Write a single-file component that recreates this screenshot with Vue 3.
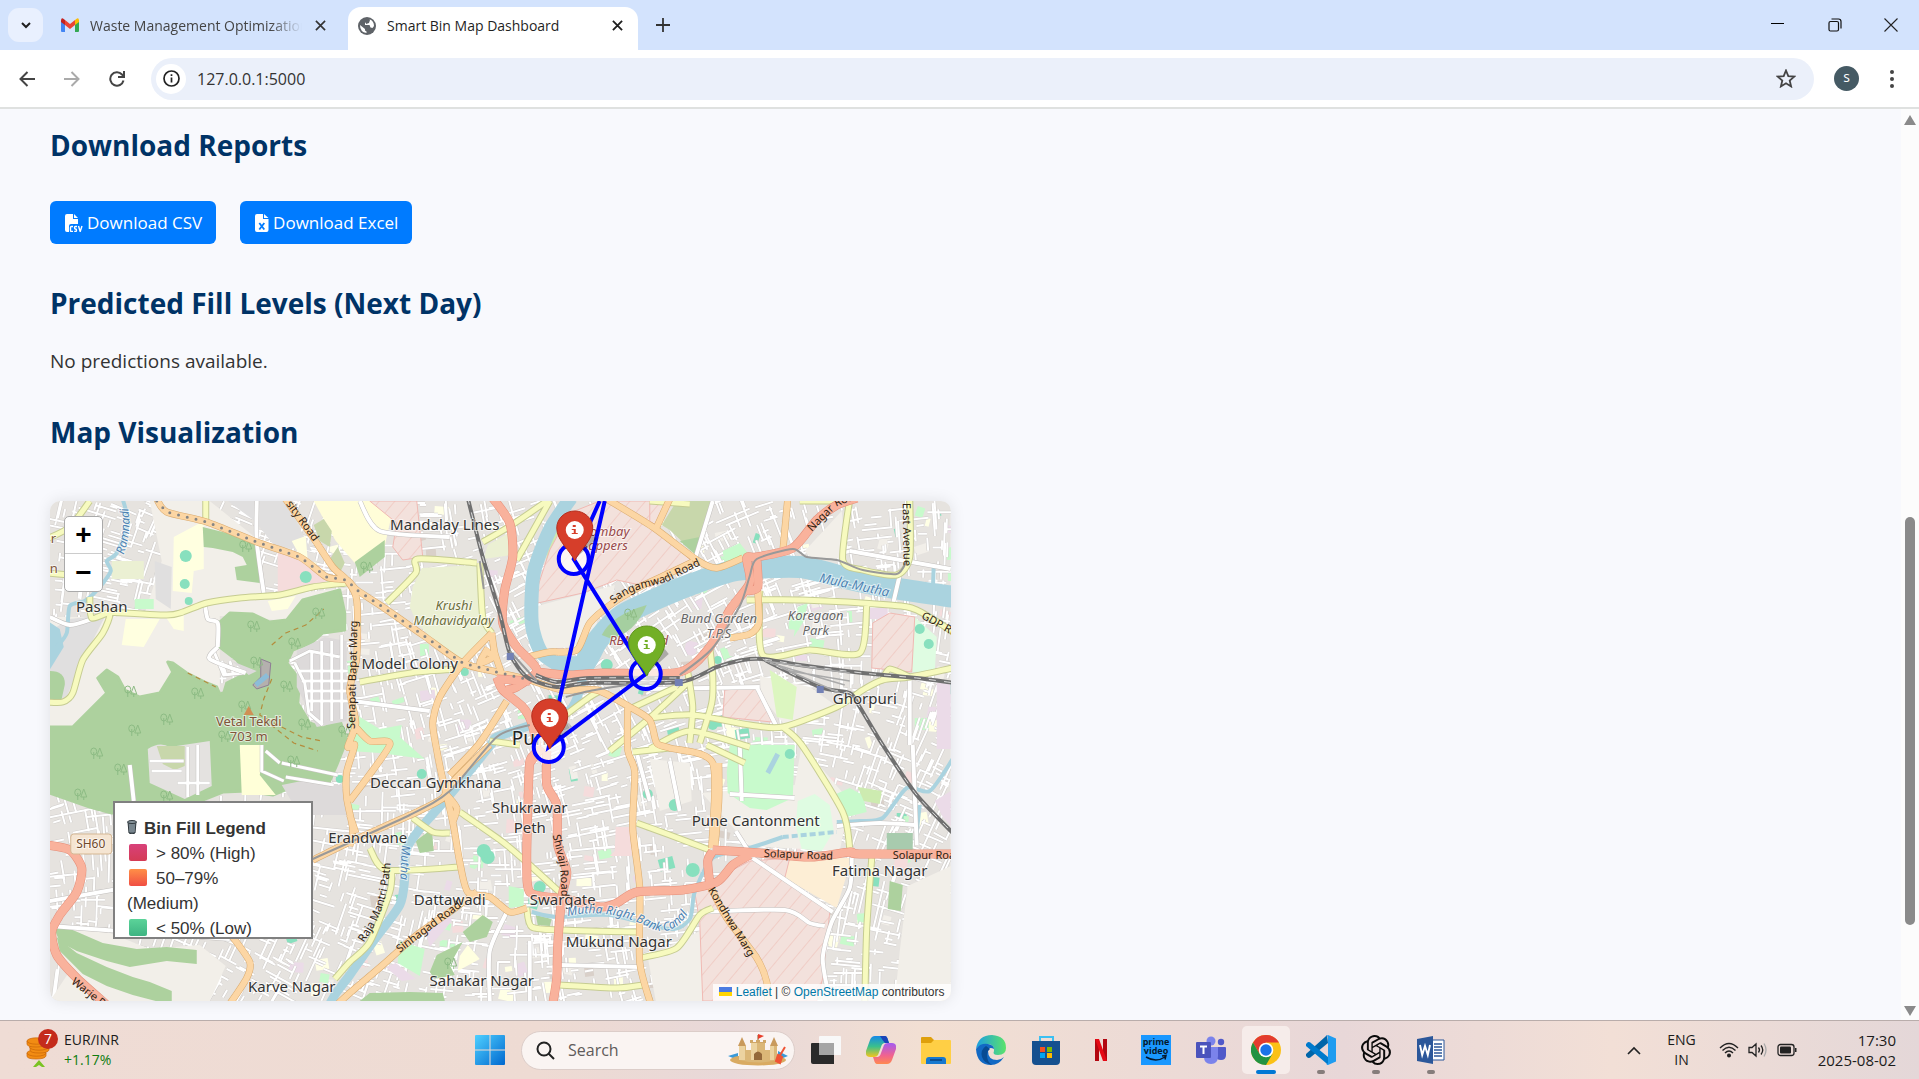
<script setup>
const smooth = (text) => {
  const p = text.trim().split(/\s+/).map((s) => s.split(',').map(Number))
  let d = `M${p[0][0]},${p[0][1]}`
  for (let i = 0; i < p.length - 1; i++) {
    const a = p[i - 1] || p[i]
    const b = p[i]
    const c = p[i + 1]
    const e = p[i + 2] || c
    const n = (v) => v.toFixed(1)
    d += `C${n(b[0] + (c[0] - a[0]) / 8)},${n(b[1] + (c[1] - a[1]) / 8)} ${n(c[0] - (e[0] - b[0]) / 8)},${n(c[1] - (e[1] - b[1]) / 8)} ${c[0]},${c[1]}`
  }
  return d
}
const join = (list) => list.map(smooth).join('')

let seed = 41
const rnd = () => {
  seed = (seed * 16807) % 2147483647
  return seed / 2147483647
}

// Residential streets: short segments that follow a slowly turning grid
const streets = []
for (let i = 0; i < 3900; i++) {
  const x = 4 + rnd() * 895
  const y = rnd() * 500
  const base = 0.3 * Math.sin(x / 120) + 0.25 * Math.cos(y / 90 + x / 300) - 0.05
  const turn = rnd() > 0.5 ? Math.PI / 2 : 0
  const len = 6 + rnd() * rnd() * 42
  const a = Math.round((base + turn) * 10) / 10
  const dx = (Math.cos(a) * len) / 2
  const dy = (Math.sin(a) * len) / 2
  streets.push(`M${(x - dx).toFixed(1)},${(y - dy).toFixed(1)}L${(x + dx).toFixed(1)},${(y + dy).toFixed(1)}`)
}
const streetPath = streets.join('')

const tints = ['#88e0be', '#c8facc', '#ffffe5', '#f5dcdc', '#ebdbe8', '#f2efe9', '#c8facc', '#ffffe5', '#f2efe9', '#d9d0c9']
const patches = []
for (let i = 0; i < 260; i++) {
  const s = 4 + rnd() * 11
  patches.push({ x: Math.round(230 + rnd() * 670), y: Math.round(rnd() * 500), w: Math.round(s), h: Math.round(4 + rnd() * 10), c: tints[i % 10], r: Math.round(rnd() * 40 - 20) })
}

const areas = [
  ['#f2efe9', '0,116 60,116 300,86 240,120 170,115 170,190 60,200 0,240'],
  ['#f2efe9', '100,0 160,0 210,40 212,92 130,110 95,112 112,60'],
  ['#e0dfdf', '0,130 20,118 56,114 30,165 16,198 0,200'],
  ['#e0dfdf', '105,60 122,66 121,108 106,98'],
  ['#e0dfdf', '178,0 236,0 262,50 225,45 205,20'],
  ['#f2efe9', '0,425 60,432 100,448 150,444 176,465 160,500 0,500 20,470'],
  ['#f2efe9', '600,258 640,262 642,300 610,310'],
  ['#f2efe9', '755,50 792,10 796,58 760,56'],
  ['#f2efe9', '710,175 760,186 788,206 735,224 712,196'],
  ['#f2efe9', '858,385 901,365 901,500 845,500 850,450'],
  ['#f2efe9', '652,292 745,284 752,244 800,300 790,350 700,345'],
  ['#f2efe9', '484,106 565,84 562,100 538,120 525,146 492,148'],
  ['#f2efe9', '598,456 650,430 655,500 606,500'],
  ['#fffdd8', '264,0 345,0 335,45 305,62 286,40'],
  ['#ffffe0', '124,36 154,20 154,68 144,70 142,92 123,90'],
  ['#ffffe0', '76,118 110,118 94,146 72,144'],
  ['#ffffe0', '116,116 134,114 134,130 124,128'],
  ['#ffffe0', '218,100 246,95 238,108 222,110'],
  ['#ffffe0', '242,40 256,35 258,60 268,62 256,66'],
  ['#f5dcdc', '228,50 250,58 278,80 262,86 228,92'],
  ['#c8facc', '85,98 104,98 104,108 85,108'],
  ['#c8facc', '300,210 330,228 352,224 350,236 375,258 330,252 300,250'],
  ['#c8facc', '350,440 375,448 370,475 348,462'],
  ['#ebdbe8', '374,425 400,412 402,420 380,446'],
  ['#ebdbe8', '336,466 346,462 366,478 352,480'],
  ['#ebf0d3', '372,67 428,64 430,112 442,132 413,159 400,156 367,122 360,106 363,86'],
  ['#ebf0d3', '62,60 94,60 94,78 62,78'],
  ['#ebf0d3', '434,58 438,44 462,30 462,54'],
  ['#cdebb0', '496,62 500,30 520,14 524,60'],
  ['#add19e', '153,26 177,32 207,44 210,82 187,79 185,66 197,64 193,56 183,51 163,47 154,46'],
  ['#add19e', '335,39 335,56 310,76 305,61'],
  ['#c8d7ab', '627,0 663,0 647,54 620,29 612,24'],
  ['#add19e', '630,40 650,36 646,54'],
  ['#c8d7ab', '264,24 274,18 282,30 280,46 270,40'],
  ['#c8d7ab', '280,58 288,46 295,62 290,72'],
  ['#add19e', '413,431 433,414 443,421 437,436 420,441'],
  ['#add19e', '380,471 387,454 413,441 400,464 405,474 385,478'],
  ['#ffffe0', '410,455 418,444 430,458 408,470'],
  ['#add19e', '310,500 320,492 360,491 393,492 395,500'],
  ['#add19e', '366,340 382,328 384,350 370,352'],
  ['#add19e', '486,414 502,418 500,425 488,424'],
  ['#add19e', '3,424 23,429 53,442 87,448 117,446 147,449 147,463 117,460 80,466 57,460 27,450 10,441'],
  ['#add19e', '7,436 27,452 57,466 83,476 100,481 122,490 122,500 106,500 83,494 57,485 33,473 10,450'],
  ['#c8facc', '677,271 680,244 745,244 743,297 717,309 700,307 678,292'],
  ['#c8facc', '784,294 800,287 813,294 817,311 797,316 790,305'],
  ['#cdebb0', '808,286 832,290 830,303 814,300'],
  ['#dffce2', '748,300 765,293 780,304 784,330 772,350 752,348 746,325'],
  ['#dcf6c0', '720,169 747,186 743,219 727,216'],
  ['#dffce2', '865,116 887,136 885,171 862,171'],
  ['#c8facc', '673,50 690,42 698,52 690,68 675,65'],
  ['#c8facc', '748,106 758,102 754,120 744,136'],
  ['#c8facc', '459,385 474,388 474,405 459,407'],
  ['#a8cbae', '837,332 863,332 863,349 837,349'],
  ['#add19e', '840,380 853,384 851,410 838,408'],
  ['#fdeed5', '740,357 802,357 787,407 735,377'],
  ['#ebdbe8', '887,182 901,182 901,248 887,248'],
  ['#ebdbe8', '885,300 901,290 901,325 893,316'],
  ['#ebdbe8', '820,107 838,107 838,118 820,118'],
  ['#f5dcdc', '566,326 582,326 582,355 560,355 565,350'],
]
const vetal = '0,226 23,226 43,206 57,192 48,177 57,169 68,176 75,189 90,196 110,192 123,171 118,161 123,162 137,172 157,182 167,186 170,193 174,192 177,182 197,172 187,159 170,146 169,122 180,112 203,113 220,121 237,119 253,99 290,89 295,112 295,129 273,132 263,141 243,149 237,162 250,179 248,202 260,222 273,227 290,219 297,239 287,264 277,287 247,284 223,294 197,290 173,291 153,299 123,311 90,311 62,312 40,306 0,292'
const military = [
  '520,12 550,0 620,0 607,29 643,61 600,86 567,79 533,92 488,102 487,89 500,49',
  '320,0 367,0 373,56 353,59 343,46 347,22',
  '823,122 840,112 865,116 862,171 822,167',
  '675,189 707,186 722,221 673,216',
  '645,391 660,381 700,360 740,357 735,377 780,411 773,477 767,500 653,500 650,421',
  '600,0 618,0 606,24 600,20',
]
const ballParks = [
  [136, 55, 6], [135, 83, 5], [256, 76, 6], [870, 128, 5], [879, 143, 5], [663, 224, 5], [625, 304, 6], [643, 369, 7], [490, 386, 6], [740, 253, 5], [438, 356, 7], [434, 350, 7], [372, 273, 5], [557, 164, 6], [415, 171, 4], [598, 293, 5], [668, 159, 4], [139, 100, 4], [206, 259, 4], [290, 278, 4],
]
const rivers = [
  { w: 14, d: smooth('521,-3 500,29 484,72 482,122 492,152 514,167') },
  { w: 22, d: smooth('508,166 533,164 548,139 573,114 620,92 640,84 687,69 750,66 800,78 850,88 905,96') },
  { w: 9, d: smooth('535,166 530,189 520,209 487,222 447,236 441,244 400,294 370,328 356,350 355,377 350,404 323,441 300,474 287,491 280,503') },
  { w: 4, d: smooth('73,-2 78,22 67,52 57,60 61,70 50,86 35,100 20,105 17,132 7,146') },
  { w: 4, d: smooth('903,258 880,290 857,287 833,317 810,320 787,321') },
  { w: 4, d: smooth('733,336 703,346 663,357 645,391 640,418 620,428 560,414 507,416 482,411') },
  { w: 4, d: smooth('870,304 866,340') },
  { w: 4, d: smooth('884,64 883,92') },
  { w: 5, d: smooth('728,253 718,272') },
]
const yellow = join([
  '-3,72 20,74', '57,111 117,114 133,111 157,102 190,97 230,94 263,86 297,82', '40,96 42,117 60,112 53,132 33,159 23,192 13,201 -3,201',
  '156,-2 156,20', '-3,38 20,26 40,0', '500,0 467,59', '433,41 462,24 500,-2', '427,62 368,58 366,72 337,102', '430,62 433,116 442,132', '310,181 367,171 410,168',
  '697,99 753,99 840,104 867,109 905,132', '817,104 810,152 760,149 713,154 710,90', '800,-2 793,59 813,69 847,74 860,56 860,-2',
  '660,146 663,176 662,202 650,242', '638,171 643,206 640,242', '600,217 643,214 700,224 733,226 787,206 813,189 833,179 860,176 903,167',
  '733,226 752,244 793,311 800,347', '833,179 840,168 860,176', '580,208 627,186', '513,216 540,196 553,189', '560,250 600,217 640,180',
  '410,311 453,341 480,364 513,394', '320,347 337,369 410,366', '363,317 383,331 400,332', '342,369 340,391 320,441 300,461 285,478', '477,407 482,426 513,429 587,431',
  '510,484 567,487 593,484', '583,251 620,247', '587,322 620,334 660,349', '657,244 695,262', '590,457 627,447 650,414 663,407', '822,357 817,427 815,503', '600,0 640,3', '750,0 800,0', '440,240 470,244', '600,248 640,230 700,246',
])
const orange = join([
  '107,-2 117,11 157,21 207,41 250,56 277,76 297,79 307,89 333,106 373,134 413,162 447,171 480,179',
  '235,-3 263,36 283,66 297,79 307,99 307,156 300,189 306,222 298,246 305,244 297,271 297,297 303,328 300,345',
  '442,132 413,162 390,196 383,222 387,249 392,274 403,321 410,361 418,391 440,396 460,411 477,407', '457,200 430,242 400,274', '442,132 445,152 453,176', '433,150 445,155 430,162 438,147',
  '478,156 500,151 527,149 540,122 563,102 590,86 620,72 643,61', '557,-2 603,26 647,59 667,67 693,57', '620,-2 607,26', '738,-2 733,51', '708,89 709,122 700,133 680,137',
  '480,179 513,189 547,189 580,206 600,219 607,242 620,247 663,262 662,347', '578,204 578,249 585,271 583,327 590,387 590,461 601,503', '669,262 669,300 665,347',
  '440,244 400,284 393,297 367,311 300,341 263,359', '397,294 407,307 403,321', '183,436 200,461 197,477 180,503', '427,391 400,411 367,434 333,464 300,492 288,503', '660,384 677,417 707,457 717,481 718,503', '300,314 306,332', '305,225 320,240 340,244 300,300',
])
const red = join([
  '443,-3 460,22 463,56 455,89 453,122 467,146 487,169 467,186 457,189', '487,171 517,174 553,172 630,171 660,146 680,109 700,82 697,57 707,56 743,47 767,19 787,4 807,-3', '707,58 708,86 697,90',
  '447,176 453,189 473,206 482,222 487,249 480,261 478,311 477,361 480,391 507,397', '497,250 497,284 507,304 508,344 517,371 512,397 508,444 507,477 503,503', '447,178 480,180', '492,246 480,262',
  '512,397 550,406 567,402 587,391 633,389 667,381 683,364 700,354', '663,349 710,352 760,356 800,351 810,353 903,353', '663,350 658,360 660,382',
  '-3,344 20,349 32,367 27,391 10,414 2,431 7,454 27,477 56,503',
])
const white = join([
  '703,357 783,411', '802,357 800,387 782,421 773,457 778,490', '863,244 867,344', '860,179 860,244', '787,325 830,322 866,324', '650,411 735,409 760,422 775,425', '645,59 663,0', '707,186 727,226', '800,50 901,68', '850,74 843,104', '207,0 207,40 214,92', '155,102 158,118 168,122 168,146', '168,146 160,158 196,172', '600,188 710,186', '0,116 20,124 42,118', '0,425 180,438', '80,264 84,300', '0,400 170,370', '587,252 600,300', '310,0 330,30 400,36', '457,411 440,450 440,500', '303,200 380,210', '620,260 630,310', '690,244 692,300', '680,293 745,297', '686,330 700,352', '510,464 590,466', '480,500 480,440',
])
const rail = join([
  '418,-3 433,56 450,112 460,152 477,176 507,186 540,182 630,181 667,166 693,159 713,158 750,164 813,172 867,177 905,182',
  '713,158 770,186 800,192 810,206 833,244 867,294 905,334', '486,174 507,181 540,177 630,177',
])
const metro = join(['480,224 447,236 400,290 360,314 263,358', '630,174 662,148 690,105 700,75 707,58 743,48 757,56 787,59 813,69 847,73 857,60', '430,60 434,88', '487,180 460,150', '600,180 540,190 516,196'])

const blocks = 'M240,160l20-10 30,6M250,170h48M252,180h46M255,190h44M258,200h40M262,150v60M272,140v84M282,140v80M292,134v84M245,162l10,20 4,30 14,12M100,260h34M102,270h30M138,246v50M148,244v50M128,282h32M164,150l10,24 20,-2M172,160l4,14M180,160l4,14M212,244v26l22,10M216,250l14,12M232,262l56,12M236,276l48,8'

const trees = [[80, 190], [195, 45], [203, 125], [268, 112], [244, 142], [206, 161], [236, 185], [194, 205], [147, 192], [116, 218], [84, 229], [174, 235], [254, 223], [46, 252], [70, 268], [30, 293], [116, 295], [243, 260], [294, 230], [316, 66], [400, 462], [580, 113]]

const places = [
  ['Mandalay Lines', 395, 29], ['Pashan', 52, 111], ['Model Colony', 360, 168], ['Ghorpuri', 815, 203], ['Deccan Gymkhana', 386, 287], ['Shukrawar', 480, 312], ['Peth', 480, 332], ['Erandwane', 318, 342], ['Dattawadi', 400, 404], ['Swargate', 513, 404], ['Mukund Nagar', 569, 446], ['Sahakar Nagar', 432, 485], ['Karve Nagar', 242, 491], ['Pune Cantonment', 706, 325], ['Fatima Nagar', 830, 375],
]
const minor = [
  ['Krushi', 404, 109, 'olive'], ['Mahavidyalay', 404, 124, 'olive'], ['Bombay', 556, 35, 'rust'], ['Sappers', 555, 49, 'rust'], ['Vetal Tekdi', 199, 225, 'peak'], ['703 m', 199, 240, 'peak'], ['Bund Garden', 669, 122, 'grey'], ['T.P.S', 669, 137, 'grey'], ['Koregaon', 766, 119, 'grey'], ['Park', 766, 134, 'grey'], ['RBM Road', 589, 144, 'rust'],
]
const lines = [
  { id: 'l1', t: 'Nagar Road', d: 'M762,31 L788,5 L820,-8', c: 'road' },
  { id: 'l2', t: 'East Avenue', d: 'M853,2 L854,70', c: 'road' },
  { id: 'l3', t: 'GDP Road', d: 'M871,117 L920,144', c: 'road' },
  { id: 'l4', t: 'Ramnadi', d: 'M74,54 C80,35 82,20 76,-4', c: 'blue' },
  { id: 'l5', t: 'sity Road', d: 'M236,3 L272,52', c: 'road' },
  { id: 'l6', t: 'Senapati Bapat Marg', d: 'M305,228 L308,110', c: 'road' },
  { id: 'l7', t: 'Sangamwadi Road', d: 'M564,103 C580,88 600,86 617,81 L655,62', c: 'road' },
  { id: 'l8', t: 'Mula-Mutha', d: 'M769,81 L840,96', c: 'blue big' },
  { id: 'l9', t: 'Mutha Right Bank Canal', d: 'M518,415 C545,409 575,413 600,427 C622,437 636,420 645,400', c: 'blue' },
  { id: 'l10', t: 'Mutha', d: 'M352,344 L350,390', c: 'blue' },
  { id: 'l11', t: 'Raja Mantri Path', d: 'M314,442 C330,418 338,400 341,360', c: 'road' },
  { id: 'l12', t: 'Sinhagad Road', d: 'M350,452 L410,407', c: 'road' },
  { id: 'l13', t: 'Shivaji Road', d: 'M503,334 C506,352 513,360 511,402', c: 'road' },
  { id: 'l14', t: 'Kondhwa Marg', d: 'M658,389 L700,458', c: 'road' },
  { id: 'l15', t: 'Warje Road', d: 'M21,482 L70,520', c: 'road' },
  { id: 'l16', t: 'Solapur Road', d: 'M714,356 L790,359', c: 'road' },
  { id: 'l17', t: 'Solapur Road', d: 'M843,358 L920,358', c: 'road' },
]
const pins = [
  { x: 525, y: 58, c: '#d63e2a', e: '#b5301f' },
  { x: 597, y: 173, c: '#72af26', e: '#5f951c' },
  { x: 500, y: 246, c: '#d63e2a', e: '#b5301f' },
]
</script>

<template>
  <div class="screen">
    <header class="tabs">
      <button class="tab-search" aria-label="Search tabs">
        <svg width="12" height="12" viewBox="0 0 12 12"><path d="M2 4l4 4 4-4" fill="none" stroke="#1f1f1f" stroke-width="2" /></svg>
      </button>
      <div class="tab">
        <svg width="18" height="14" viewBox="0 0 18 14"><path d="M0 2v11q0 1 1 1h3V5z" fill="#4285f4" /><path d="M18 2v11q0 1-1 1h-3V5z" fill="#34a853" /><path d="M14 2l2-1.600Q18 0 18 2.500V4l-4 3z" fill="#fbbc04" /><path d="M4 2l5 4 5-4v5l-5 4-5-4z" fill="#ea4335" /><path d="M0 4V2.500Q0 0 2 .4L4 2v5z" fill="#c5221f" /></svg>
        <span class="tab-title faded">Waste Management Optimization</span>
        <button class="tab-close" aria-label="Close tab"><svg width="11" height="11" viewBox="0 0 12 12"><path d="M1 1l10 10M11 1L1 11" stroke="#333" stroke-width="1.800" /></svg></button>
      </div>
      <div class="tab active">
        <svg width="18" height="18" viewBox="0 0 18 18"><circle cx="9" cy="9" r="9" fill="#5f6368" /><path d="M2 8l5 4v1.500l1.500 1V16Q2 15 2 8zM12 2.500L10 4 7 6v2h4.500l1 2.500 2 .5L16 9q0-5-4-6.500z" fill="#fff" /><path d="M7 1.800L12 3l-1 3-3 1z" fill="#5f6368" /></svg>
        <span class="tab-title">Smart Bin Map Dashboard</span>
        <button class="tab-close" aria-label="Close tab"><svg width="11" height="11" viewBox="0 0 12 12"><path d="M1 1l10 10M11 1L1 11" stroke="#1f1f1f" stroke-width="2" /></svg></button>
      </div>
      <button class="new-tab" aria-label="New tab"><svg width="14" height="14" viewBox="0 0 14 14"><path d="M7 0v14M0 7h14" stroke="#333" stroke-width="1.800" /></svg></button>
      <div class="window-buttons">
        <button aria-label="Minimize"><svg width="14" height="14" viewBox="0 0 14 14"><path d="M0 5.500h13" stroke="#000" /></svg></button>
        <button aria-label="Restore"><svg width="14" height="14" viewBox="0 0 14 14" fill="none" stroke="#111" stroke-width="1.200"><rect x="1" y="3.500" width="9.500" height="9.500" rx="1.500" /><path d="M3.500 1h7q2.500 0 2.500 2.500v7" /></svg></button>
        <button aria-label="Close"><svg width="14" height="14" viewBox="0 0 14 14"><path d="M.5.5l13 13M13.500.5l-13 13" stroke="#222" stroke-width="1.100" /></svg></button>
      </div>
    </header>

    <nav class="toolbar">
      <button aria-label="Back"><svg width="16" height="16" viewBox="0 0 16 16" fill="none" stroke="#444" stroke-width="2"><path d="M16 8H2M8.500 1L1.500 8l7 7" /></svg></button>
      <button aria-label="Forward"><svg width="16" height="16" viewBox="0 0 16 16" fill="none" stroke="#aaa" stroke-width="2"><path d="M0 8h14M7.500 1l7 7-7 7" /></svg></button>
      <button aria-label="Reload"><svg width="16" height="16" viewBox="0 0 16 16" fill="none" stroke="#444" stroke-width="2"><path d="M14.500 9.500A6.700 6.700 0 1 1 13 3.500L15 5.500M15 0v6H9" /></svg></button>
      <label class="omnibox">
        <span class="info"><svg width="17" height="17" viewBox="0 0 17 17"><circle cx="8.500" cy="8.500" r="7.500" fill="none" stroke="#222" stroke-width="1.700" /><path d="M8.500 7.500v5M8.500 4.200v1.800" stroke="#222" stroke-width="1.700" /></svg></span>
        <input type="text" value="127.0.0.1:5000" aria-label="Address" />
        <svg width="20" height="19" viewBox="0 0 20 19"><path d="M10 1.500l2.300 5.600 6 .5-4.600 3.900 1.400 5.900L10 14.200l-5.100 3.200 1.400-5.900L1.700 7.600l6-.5z" fill="none" stroke="#444" stroke-width="1.800" /></svg>
      </label>
      <span class="avatar">s</span>
      <button class="dots" aria-label="Menu"><svg width="6" height="20" viewBox="0 0 6 20" fill="#444"><circle cx="3" cy="3" r="2" /><circle cx="3" cy="10" r="2" /><circle cx="3" cy="17" r="2" /></svg></button>
    </nav>

    <div class="viewport">
      <main>
        <h2>Download Reports</h2>
        <div class="downloads">
          <a href="#csv"><svg width="18" height="18" viewBox="0 0 18 18"><path d="M2 0h6v5h5v5H6q-2 0-2 2v6H2q-2 0-2-2V2q0-2 2-2zM9 0l4 4H9z" fill="#fff" /><path d="M8 12.500H6.500q-1 0-1 1v3q0 1 1 1H8M12 12.500h-1.500q-1 0-1 1.200t1 1.300 1 1.300-1 1.200H9.200M13.500 12l1.700 5.500L17 12" fill="none" stroke="#fff" stroke-width="1.400" /></svg><span>Download CSV</span></a>
          <a href="#excel"><svg width="14" height="18" viewBox="0 0 14 18"><path d="M2 0h6v5h5.500v11q0 2-2 2H2q-2 0-2-2V2q0-2 2-2zM9 0l4.500 4H9z" fill="#fff" /><path d="M4.300 9l5 6.500M9.300 9l-5 6.500" stroke="#007bff" stroke-width="1.800" /></svg><span>Download Excel</span></a>
        </div>
        <h2>Predicted Fill Levels (Next Day)</h2>
        <p>No predictions available.</p>
        <h2>Map Visualization</h2>

        <section class="map" aria-label="Map">
          <svg class="canvas" viewBox="0 0 901 500" preserveAspectRatio="xMidYMid slice">
            <defs>
              <pattern id="hatch" width="12" height="12" patternUnits="userSpaceOnUse" patternTransform="rotate(40)"><rect width="12" height="12" fill="#f3e1dc" /><path d="M0 0v12" stroke="#f0cdc6" stroke-width="2" /></pattern>
              <symbol id="tree" viewBox="0 0 14 12"><path d="M4 12V5M4 1q-3 0-3 3.500T4 8t3-3.500T4 1M10 12V9M10 1L7 9h6z" fill="none" stroke="#8dbb84" stroke-width="1" /></symbol>
            </defs>
            <rect width="901" height="500" fill="#e6e3df" />
            <rect v-for="(q, i) in patches" :key="i" :x="q.x" :y="q.y" :width="q.w" :height="q.h" :fill="q.c" :transform="`rotate(${q.r} ${q.x} ${q.y})`" />
            <path :d="streetPath" stroke="#cfccca" stroke-width="3" fill="none" />
            <path :d="streetPath" stroke="#fff" stroke-width="2" fill="none" />
            <polygon v-for="(a, i) in areas" :key="'a' + i" :points="a[1]" :fill="a[0]" />
            <polygon :points="vetal" fill="#add19e" stroke="#add19e" stroke-width="3" stroke-linejoin="round" />
            <polygon v-for="(m, i) in military" :key="'m' + i" :points="m" fill="url(#hatch)" stroke="#f0b9b3" />
            <circle v-for="(b, i) in ballParks" :key="'b' + i" :cx="b[0]" :cy="b[1]" :r="b[2]" fill="#88e0be" />
            <path d="M98,248Q110,240 120,246L160,240 162,285 135,298 100,282z" fill="#e4e2e0" />
            <path d="M107,245h28v20l-10,4-12-6z" fill="#c8d7ab" />
            <path d="M190,244h24l-4,30 16,20h-34z" fill="#ffffd8" />
            <path d="M247,150l28-14 22,4v80l-30,6-20-40z M182,160l25,10-8,4z M232,284l20-4 40,4 8,30h-50z" fill="#dddada" />
            <path :d="blocks" stroke="#c7c4c2" stroke-width="4" fill="none" />
            <path :d="blocks" stroke="#fff" stroke-width="3" fill="none" />
            <path d="M211,158l10,4-2,22-12,4-4-4 8-8z" fill="#b4b0ae" stroke="#8e7d94" /><path d="M206,184l12-10" stroke="#8cbdd8" stroke-width="5" />
            <path d="M138,172l20,10 8,4M222,144l14-12 20-8 18-16M222,178l-8,20-4,16 18,10 24,12 20,4M214,218l30,24 24,8" fill="none" stroke="#b48c3c" stroke-width="1.200" stroke-dasharray="5 4" />
            <path d="M-2,120L10,128 14,146-2,172z" fill="#aad3df" /><path d="M0,170q16,0 15,14l-4,18H0z" fill="#add19e" />
            <path v-for="(r, i) in rivers" :key="'r' + i" :d="r.d" :stroke-width="r.w" fill="none" stroke="#aad3df" />
            <path d="M733,336L787,331" stroke="#aad3df" stroke-width="4" stroke-dasharray="6 3" />
            <path d="M552,134q10-20 45-30-12,28-35,34z" fill="#a5cfa0" />
            <svg v-for="(t, i) in trees" :key="'t' + i" :x="t[0] - 6" :y="t[1] - 6" width="14" height="12"><use href="#tree" /></svg>

            <g fill="none" stroke-linejoin="round">
              <path :d="white" stroke="#c2bfbd" stroke-width="5" /><path :d="white" stroke="#fff" stroke-width="4" />
              <path :d="yellow" stroke="#c6cc92" stroke-width="7" /><path :d="yellow" stroke="#f7fabf" stroke-width="5" />
              <path :d="orange" stroke="#d9aa6e" stroke-width="7" /><path :d="orange" stroke="#fcd6a4" stroke-width="6" />
              <path :d="red" stroke="#e58f7a" stroke-width="9" /><path :d="red" stroke="#f9b29c" stroke-width="8" />
              <path d="M107,0L117,11 157,21 207,41 250,56 277,76 297,79 307,89 333,106 373,134 413,162 447,171 480,179" stroke="#858585" stroke-width="3" stroke-linecap="round" stroke-dasharray="0 9" />
              <path :d="rail" stroke="#707070" stroke-width="4" /><path :d="rail" stroke="#ddd" stroke-width="1" stroke-dasharray="7 8" />
              <path d="M715,160L800,172 M720,162L795,184 M730,166L790,192 M740,170L800,180" stroke="#aaa" stroke-width="1.500" />
              <path :d="metro" stroke="#999" stroke-width="2" />
            </g>
            <path d="M457,152h7v7h-7zM625,178h8v7h-8zM767,185h7v7h-7z" fill="#7381b5" />
            <path d="M194,214l5-9 5,9z" fill="#d08f55" />
            <rect x="21" y="333" width="41" height="20" rx="3" fill="#f5e5d2" stroke="#d5b793" />
            <text x="41" y="347" class="shield">SH60</text>
            <text x="1" y="42" class="peak small">r</text><text x="0" y="72" class="peak small">n</text>
            <text x="462" y="244" class="city">Pune</text>
            <text v-for="p in places" :key="p[0]" :x="p[1]" :y="p[2]" class="place">{{ p[0] }}</text>
            <text v-for="p in minor" :key="p[0]" :x="p[1]" :y="p[2]" class="minor" :class="p[3]">{{ p[0] }}</text>
            <g v-for="l in lines" :key="l.id"><path :id="l.id" :d="l.d" fill="none" /><text class="along" :class="l.c"><textPath :href="'#' + l.id">{{ l.t }}</textPath></text></g>

            <g stroke="#00f" stroke-width="4" fill="none">
              <circle v-for="(p, i) in pins" :key="i" :cx="p.x - 1" :cy="p.y" r="15" fill="#fff" fill-opacity="0.7" />
              <path d="M550,0L524,58 596,173 499,246 555,0" />
            </g>
            <g v-for="(p, i) in pins" :key="'p' + i" :transform="`translate(${p.x} ${p.y})`">
              <path d="M0,0L22,-20 14,-30z" fill="#000" opacity="0.25" />
              <path d="M0,2C-4,-8 -18,-18 -18,-31A18,17 0 0 1 18,-31C18,-18 4,-8 0,2z" :fill="p.c" :stroke="p.e" />
              <circle cy="-29" r="9" fill="#fff" />
              <path d="M-2,-34h3v2h-3zM-3,-30h4v4h2v1h-6v-1h2v-3h-2z" :fill="p.c" />
            </g>
          </svg>
          <div class="zoom"><button aria-label="Zoom in">+</button><button aria-label="Zoom out">−</button></div>
          <div class="legend">
            <strong><svg width="10" height="14" viewBox="0 0 10 14"><path d="M1 2h8l-1 11q-3 2-6 0z" fill="#59666e" stroke="#2f383d" /><path d="M3 4v8M5 4v8M7 4v8" stroke="#a9b7bf" stroke-width=".8" /><ellipse cx="5" cy="2" rx="4.500" ry="1.500" fill="#8b979e" stroke="#2f383d" /></svg>Bin Fill Legend</strong><br />
            <i class="high"></i>&gt; 80% (High)<br />
            <i class="medium"></i>50–79% (Medium)<br />
            <i class="low"></i>&lt; 50% (Low)
          </div>
          <div class="credit"><svg width="13" height="9" viewBox="0 0 13 9"><path d="M0 0h13v5H0z" fill="#4c7be1" /><path d="M0 5h13v4H0z" fill="#ffd500" /></svg> <a href="#leaflet">Leaflet</a> | © <a href="#osm">OpenStreetMap</a> contributors</div>
        </section>
      </main>
      <div class="scrollbar"><i class="up"></i><div class="rail"><div class="thumb"></div></div><i class="down"></i></div>
    </div>

    <footer class="taskbar">
      <div class="widget">
        <div class="coins">
          <svg width="30" height="36" viewBox="0 0 30 36"><g fill="#f28c13" stroke="#c96508" stroke-width=".7"><path d="M1 21v3q0 3 9 3t10-3v-3z" /><ellipse cx="10.500" cy="21" rx="9.500" ry="3.200" /><path d="M4 15v3q0 3 9 3t10-3v-3z" /><ellipse cx="13" cy="15" rx="9.500" ry="3.200" /><path d="M1 9v3q0 3 9 3t10-3V9z" /><ellipse cx="10.500" cy="9" rx="9.500" ry="3.200" /></g><path d="M13 28l6 7h-3l-3-2-3 2H7z" fill="#7ac323" /></svg>
          <span class="badge">7</span>
        </div>
        <div class="rate"><span>EUR/INR</span><span class="gain">+1.17%</span></div>
      </div>
      <div class="apps">
        <button class="app" aria-label="Start"><svg width="30" height="30" viewBox="0 0 30 30"><defs><linearGradient id="win" x1="0" y1="0" x2="1" y2="1"><stop stop-color="#4fd0ff" /><stop offset="1" stop-color="#0068cf" /></linearGradient></defs><path d="M1 0h13.500v14.500H0V1q0-1 1-1zM15.500 0H29q1 0 1 1v13.500H15.500zM0 15.500h14.500V30H1q-1 0-1-1zM15.500 15.500H30V29q0 1-1 1H15.500z" fill="url(#win)" /></svg></button>
        <label class="search">
          <svg width="19" height="19" viewBox="0 0 19 19" fill="none" stroke="#222" stroke-width="2"><circle cx="8" cy="8" r="6.500" /><path d="M12.500 12.500L18 18" /></svg>
          <input type="text" placeholder="Search" aria-label="Search" />
          <svg width="60" height="32" viewBox="0 0 60 32"><path d="M0 22l10-3v7zM60 22l-10-5v9z" fill="#3a9ad9" /><ellipse cx="30" cy="26" rx="28" ry="5.500" fill="#d9ab62" /><path d="M11 26V12h7v4h5V9h14v7h5v-4h7v14q-18 5-38 0z" fill="#dbb777" /><path d="M11 12h6v14h-6zM23 9h6v17h-6zM42 12h4v14h-4z" fill="#ecd3a0" /><path d="M10 12l4-9 4 9zM42 12l4-9 4 9z" fill="#c99a5c" /><path d="M22 9V6h3v2h3V6h4v2h3V6h3v3z" fill="#d0a767" /><path d="M26 26v-6q4-5 8 0v6z" fill="#94693a" /><path d="M30 6V1" stroke="#8c5a2b" /><path d="M30 0l6 2-6 3z" fill="#e83f2c" /><path d="M57 13l-6 10M50 21l4 2-2 6-4-2z" stroke="#ef5435" stroke-width="2" fill="#ef5435" /></svg>
        </label>
        <button class="app" aria-label="Task view"><svg width="30" height="28" viewBox="0 0 30 28"><path d="M1 7h22v21H2q-2 0-2-2V8q0-1 1-1z" fill="#2a2a2a" /><path d="M9 0h20q1 0 1 1v18H8V1q0-1 1-1z" fill="#f8f8f8" /><path d="M8 7h15v12H8z" fill="#a5a5a5" /></svg></button>
        <button class="app" aria-label="Copilot"><svg width="30" height="28" viewBox="0 0 30 28"><defs><linearGradient id="ca" x1="0" y1="0" x2="0" y2="1"><stop stop-color="#1689e8" /><stop offset=".5" stop-color="#3ac08c" /><stop offset="1" stop-color="#f4c51d" /></linearGradient><linearGradient id="cb" x1="0" y1="0" x2="0" y2="1"><stop stop-color="#a35af2" /><stop offset=".6" stop-color="#f1638e" /><stop offset="1" stop-color="#ff8a50" /></linearGradient></defs><path d="M9 0h10q2 0 3 4l1 3h-4q-3 0-4 4l-3 8q-1 2-4 2H4q-5 0-4-6l4-11Q5.500 0 9 0z" fill="url(#ca)" /><path d="M14 0h5q2 0 3 4l1 3h-4q-2-2-5-7z" fill="#1b44b8" /><path d="M21 28H11q-2 0-3-4l-1-3h4q3 0 4-4l3-8q1-2 4-2h4q5 0 4 6l-4 11q-1.500 4-5 4z" fill="url(#cb)" /></svg></button>
        <button class="app" aria-label="File Explorer"><svg width="30" height="28" viewBox="0 0 30 28"><path d="M1 1h9l3 3h6v8H0V2q0-1 1-1z" fill="#dfa00c" /><path d="M0 7h10l3-3h16q1 0 1 1v22q0 1-1 1H1q-1 0-1-1z" fill="#ffcf45" /><path d="M5 28v-4q0-3 3-3h14q3 0 3 3v4z" fill="#1779cf" /><path d="M9 24h12" stroke="#0c4f92" stroke-width="2" /></svg></button>
        <button class="app" aria-label="Edge"><svg width="30" height="30" viewBox="0 0 30 30"><defs><linearGradient id="ed" x1="0" y1="0" x2="1" y2="0"><stop stop-color="#1b9de2" /><stop offset="1" stop-color="#5be36b" /></linearGradient></defs><path d="M0 14Q2 0 16 0q14 1 14 13 0 7-8 7-6 0-4-4 1-6-6-7Q4 9 0 14z" fill="url(#ed)" /><path d="M0 14q4-6 12-5 6 1 6 5-5-3-6 2 0 9 9 9 4 0 7-3-5 8-13 8Q1 30 0 14z" fill="#1269c4" /><path d="M10 11q-6 4-4 11 2 6 10 8-5-3-5-10 0-4 3-6z" fill="#084b93" /></svg></button>
        <button class="app" aria-label="Microsoft Store"><svg width="30" height="30" viewBox="0 0 30 30"><path d="M9 6V2h13v4" fill="none" stroke="#3cc0f2" stroke-width="2" /><path d="M1 6h28v20q0 4-4 4H5q-4 0-4-4z" fill="#15508f" /><path d="M9 12h5v5H9z" fill="#f25022" /><path d="M16 12h5v5h-5z" fill="#7fba00" /><path d="M9 18h5v5H9z" fill="#00a4ef" /><path d="M16 18h5v5h-5z" fill="#ffb900" /></svg></button>
        <button class="app" aria-label="Netflix"><svg width="12" height="22" viewBox="0 0 12 22"><path d="M0 0h4v22H0zM8 0h4v22H8z" fill="#b20710" /><path d="M0 0h4l8 22H8z" fill="#e50914" /></svg></button>
        <button class="app" aria-label="Prime Video"><svg width="30" height="30" viewBox="0 0 30 30"><path d="M0 0h30v30H0z" fill="#1a98ff" /><text x="15" y="10" class="prime">prime</text><text x="15" y="19" class="prime">video</text><path d="M5 22q10 6 19 0M21 21l4-.5-1 4" fill="none" stroke="#06182c" stroke-width="1.500" /></svg></button>
        <button class="app" aria-label="Teams"><svg width="30" height="28" viewBox="0 0 30 28"><circle cx="15" cy="5" r="4.500" fill="#7b83eb" /><circle cx="25" cy="6" r="3.200" fill="#5059c9" /><path d="M20 11h9q1 0 1 1v7q0 5-5 5t-5-4z" fill="#5059c9" /><path d="M8 11h14v9q0 8-7 8t-7-7z" fill="#7b83eb" /><rect y="6" width="15" height="16" rx="1" fill="#4b53bc" /><path d="M4 10.500h7M7.500 10.500V18" stroke="#fff" stroke-width="2" /></svg></button>
        <button class="app current" aria-label="Chrome"><svg width="30" height="30" viewBox="0 0 30 30"><circle cx="15" cy="15" r="15" fill="#fbc116" /><path d="M2 7.500A15 15 0 0 1 28 7.500H15L8.500 19z" fill="#e33b2e" /><path d="M2 7.500L8.600 19q3 4 6.400 3.500L15 30A15 15 0 0 1 2 7.500z" fill="#229342" /><path d="M8.600 19L15 30l6.500-11.200q-6 6-12.900.2z" fill="#229342" /><circle cx="15" cy="15" r="7.300" fill="#fff" /><circle cx="15" cy="15" r="5.700" fill="#1a73e8" /></svg></button>
        <button class="app open" aria-label="Visual Studio Code"><svg width="30" height="30" viewBox="0 0 30 30"><path d="M21 0l-2 2L0 19v2l2 2 2-.2L22 8z" fill="#0065a9" /><path d="M0 9l2-2 2 .2L22 22v8l-2-2L0 11z" fill="#007acc" /><path d="M22 0l8 3.500v23L22 30q-1 0-2-1.500 2 1 2-1v-25q0-2-2-1z" fill="#1f9cf0" /></svg></button>
        <button class="app open" aria-label="ChatGPT"><svg width="30" height="30" viewBox="0 0 24 24"><path fill="#0b0b0b" d="M22.282 9.821a5.985 5.985 0 0 0-.516-4.910 6.046 6.046 0 0 0-6.510-2.900A6.065 6.065 0 0 0 4.981 4.182a5.985 5.985 0 0 0-3.998 2.900 6.046 6.046 0 0 0 .743 7.097 5.980 5.980 0 0 0 .510 4.911 6.051 6.051 0 0 0 6.515 2.900A5.985 5.985 0 0 0 13.260 24a6.056 6.056 0 0 0 5.772-4.206 5.990 5.990 0 0 0 3.997-2.900 6.056 6.056 0 0 0-.747-7.073zM13.260 22.430a4.476 4.476 0 0 1-2.876-1.040l.141-.081 4.779-2.758a.795.795 0 0 0 .392-.681v-6.737l2.020 1.168a.071.071 0 0 1 .038.052v5.583a4.504 4.504 0 0 1-4.494 4.494zM3.600 18.304a4.470 4.470 0 0 1-.535-3.014l.142.085 4.783 2.759a.771.771 0 0 0 .780 0l5.843-3.369v2.332a.080.080 0 0 1-.033.062L9.740 19.950a4.500 4.500 0 0 1-6.140-1.646zM2.340 7.896a4.485 4.485 0 0 1 2.366-1.973V11.600a.766.766 0 0 0 .388.676l5.815 3.355-2.020 1.168a.076.076 0 0 1-.071 0l-4.830-2.786A4.504 4.504 0 0 1 2.340 7.872zm16.597 3.855l-5.833-3.387L15.119 7.200a.076.076 0 0 1 .071 0l4.830 2.791a4.494 4.494 0 0 1-.676 8.105v-5.678a.790.790 0 0 0-.407-.667zm2.010-3.023l-.141-.085-4.774-2.782a.776.776 0 0 0-.785 0L9.409 9.230V6.897a.066.066 0 0 1 .028-.061l4.830-2.787a4.500 4.500 0 0 1 6.680 4.660zm-12.640 4.135l-2.020-1.164a.080.080 0 0 1-.038-.057V6.075a4.500 4.500 0 0 1 7.375-3.453l-.142.080L8.704 5.460a.795.795 0 0 0-.393.681zm1.097-2.365l2.602-1.500 2.607 1.500v2.999l-2.597 1.500-2.607-1.500z" /></svg></button>
        <button class="app open" aria-label="Word"><svg width="28" height="28" viewBox="0 0 28 28"><path d="M15 4h12v20H15z" fill="#fff" stroke="#2b579a" /><path d="M17 8h8M17 11h8M17 14h8M17 17h8M17 20h8" stroke="#2b579a" stroke-width="1.500" /><path d="M0 3l16-3v28L0 25z" fill="#2b579a" /><path d="M3 9l2.200 10L8 10l2.800 9L13 9" fill="none" stroke="#fff" stroke-width="1.900" /></svg></button>
      </div>
      <div class="tray">
        <svg width="14" height="9" viewBox="0 0 14 9"><path d="M1 8l6-6 6 6" fill="none" stroke="#222" stroke-width="1.600" /></svg>
        <div class="lang"><span>ENG</span><span>IN</span></div>
        <div class="status">
          <svg width="20" height="16" viewBox="0 0 20 16" fill="none" stroke="#222" stroke-width="1.400"><path d="M1 6q9-9 18 0M3.500 8.500q6.500-6.500 13 0M6 11q4-4 8 0" /><circle cx="10" cy="13.500" r="1.300" fill="#222" /></svg>
          <svg width="20" height="16" viewBox="0 0 20 16" fill="none" stroke="#222" stroke-width="1.300"><path d="M1 5.500h3L8 2v12l-4-3.500H1zM10.500 5.500q2 2.500 0 5M13 3.500q3.500 4.500 0 9" /><path d="M16 1.500q4 6.500 0 13" stroke="#aaa" /></svg>
          <svg width="20" height="14" viewBox="0 0 20 14"><rect x="1" y="1.500" width="16" height="11" rx="2.500" fill="none" stroke="#222" stroke-width="1.300" /><rect x="3" y="3.500" width="11" height="7" rx="1" fill="#222" /><path d="M18 5h1.500v4H18z" fill="#222" /></svg>
        </div>
        <div class="clock"><span>17:30</span><span>2025-08-02</span></div>
      </div>
    </footer>
  </div>
</template>

<style>
body { margin: 0; }
</style>

<style scoped>
* { box-sizing: border-box; }
.screen { display: flex; flex-direction: column; height: 100vh; overflow: hidden; font-family: "Open Sans", "Noto Sans", sans-serif; color: #333; }
button { display: flex; align-items: center; justify-content: center; padding: 0; border: 0; background: none; }
input { min-width: 0; flex: 1; padding: 0; border: 0; outline: 0; background: none; font: inherit; color: inherit; }
svg { flex: none; }

.tabs { display: flex; align-items: center; height: 50px; flex: none; padding: 0 8px; background: #d3e3fd; }
.tab-search { width: 35px; height: 34px; border-radius: 11px; background: #e9f0fe; }
.tab { display: flex; align-items: center; gap: 11px; width: 300px; padding: 0 16px 0 18px; font-size: 14px; color: #444; }
.tab.active { align-self: flex-end; width: 290px; height: 43px; margin-left: 5px; padding: 0 14px 6px 10px; border-radius: 13px 13px 0 0; background: #fff; color: #1f1f1f; }
.tab-title { flex: 1; overflow: hidden; white-space: nowrap; }
.faded { -webkit-mask-image: linear-gradient(90deg, #000 85%, transparent); mask-image: linear-gradient(90deg, #000 85%, transparent); }
.tab-close { width: 14px; height: 20px; }
.new-tab { width: 50px; height: 34px; }
.window-buttons { display: flex; margin-left: auto; }
.window-buttons button { width: 57px; height: 40px; }
.window-buttons button:last-child { width: 40px; margin-left: 8px; }

.toolbar { display: flex; align-items: center; flex: none; height: 59px; padding: 0 14px 0 4px; border-bottom: 2px solid #dfe1e0; background: #fff; }
.toolbar button { width: 45px; height: 36px; }
.omnibox { display: flex; align-items: center; flex: 1; height: 42px; margin-left: 12px; padding: 0 18px 0 5px; border-radius: 21px; background: #ebf0fa; font-size: 16px; color: #333; }
.info { display: flex; align-items: center; justify-content: center; width: 30px; height: 30px; margin-right: 11px; border-radius: 50%; background: #fff; }
.avatar { width: 25px; height: 25px; margin-left: 20px; border-radius: 50%; background: #455a64; color: #fff; font-size: 14px; line-height: 22px; text-align: center; }
.toolbar .dots { width: 26px; margin-left: 20px; }

.viewport { display: flex; flex: 1; min-height: 0; background: #f8f9fd; }
main { flex: 1; padding: 0 50px; }
h2 { margin: 0; font-size: 28px; line-height: 40px; font-weight: 700; color: #003366; }
h2:first-child { margin-top: 16px; }
.downloads { display: flex; gap: 24px; margin: 36px 0 39px; }
.downloads a { display: flex; align-items: center; gap: 4px; height: 43px; padding: 0 14px 0 15px; border-radius: 6px; background: #007bff; color: #fff; font-size: 17px; text-decoration: none; }
p { margin: 23px 0 36px; font-size: 19px; line-height: 30px; }

.map { position: relative; width: 50%; height: 500px; margin-top: 49px; overflow: hidden; border-radius: 10px; box-shadow: 0 0 15px rgba(0, 0, 0, 0.1); }
.canvas { display: block; width: 100%; height: 100%; font-family: "Noto Sans", sans-serif; }
.canvas text { paint-order: stroke; stroke: rgba(255, 255, 255, 0.6); stroke-width: 2px; }
.place { font-size: 15px; text-anchor: middle; fill: #333; }
.city { font-size: 19px; fill: #222; }
.minor { font-size: 13px; font-style: italic; text-anchor: middle; }
.shield { font-size: 12px; text-anchor: middle; fill: #70492a; }
.small { font-size: 13px; }
.olive { fill: #6d6f3c; }
.rust { fill: #98494a; }
.grey { fill: #666; }
.peak { fill: #80553a; font-style: normal; }
.along { font-size: 11px; fill: #2f2212; }
.canvas .road { stroke: none; }
.blue { font-size: 12px; font-style: italic; fill: #4d83b3; }
.big { font-size: 13px; }

.zoom { position: absolute; top: 15px; left: 14px; border: 1px solid #aaa; border-radius: 5px; overflow: hidden; background: #fff; }
.zoom button { width: 37px; height: 37px; font: 700 28px "Liberation Sans", sans-serif; color: #000; }
.zoom button:first-child { border-bottom: 1px solid #ccc; }
.legend { position: absolute; top: 300px; left: 63px; width: 200px; height: 138px; padding: 13px 20px 13px 12px; overflow: hidden; border: 2px solid grey; background: #fff; font: 17px/25px "Liberation Sans", sans-serif; color: #333; }
.legend strong svg { margin-right: 7px; }
.legend i { display: inline-block; width: 18px; height: 17px; margin: 0 9px 0 2px; border-radius: 2px; vertical-align: -2px; }
.high { background: linear-gradient(#d8417a, #d43b55); }
.medium { background: linear-gradient(#ff8f47, #f04e43); }
.low { background: linear-gradient(#5bd399, #3eb482); }
.credit { position: absolute; right: 0; bottom: 0; padding: 0 6px; background: rgba(255, 255, 255, 0.8); font: 12px/17px "Liberation Sans", sans-serif; }
.credit a { color: #0078a8; text-decoration: none; }

.scrollbar { display: flex; flex-direction: column; align-items: center; justify-content: space-between; width: 18px; padding: 6px 0 4px; background: #fcfcfc; }
.up, .down { border: 6px solid transparent; border-top: 0; border-bottom: 10px solid #8a8a8a; }
.down { border-bottom: 0; border-top: 10px solid #8a8a8a; }
.rail { display: flex; flex-direction: column; justify-content: flex-end; flex: 1; width: 10px; padding-bottom: 81px; }
.thumb { height: 51%; border-radius: 5px; background: #8a8a8a; }

.taskbar { display: grid; grid-template-columns: 1fr auto 1fr; align-items: center; flex: none; height: 59px; border-top: 1px solid #b9adab; background: linear-gradient(90deg, #efdcd5, #eedbd3 28%, #e8d8d8 38%, #f2dfd3 48%, #e8d7d8 70%, #f2dfd6 84%, #e4d7d8); font-size: 14px; line-height: 20px; color: #1b1b1b; }
.widget { display: flex; align-items: center; gap: 7px; padding-left: 26px; }
.coins { position: relative; height: 36px; width: 31px; }
.badge { position: absolute; top: -3px; right: -1px; width: 20px; height: 20px; border-radius: 50%; background: #c42b1c; color: #fff; text-align: center; }
.rate, .lang, .clock { display: flex; flex-direction: column; }
.gain { color: #107c10; }
.apps { display: flex; align-items: center; gap: 7px; padding-left: 2px; }
.app { position: relative; width: 48px; height: 48px; border-radius: 5px; }
.current { background: #f6ecea; }
.open::after, .current::after { content: ""; position: absolute; bottom: 0; left: 20px; width: 8px; height: 4px; border-radius: 2px; background: #857d7b; }
.current::after { left: 14px; width: 20px; background: #0078d4; }
.search { display: flex; align-items: center; gap: 13px; width: 274px; height: 39px; padding: 0 6px 0 14px; border: 1px solid #dccdc9; border-radius: 20px; background: #faf4f2; font-size: 16px; color: #555; }
.search input::placeholder { color: #5f5b5a; opacity: 1; }
.prime { font: 700 9px "Open Sans", sans-serif; text-anchor: middle; fill: #06182c; }
.tray { display: flex; align-items: center; justify-content: flex-end; padding-right: 23px; }
.lang { margin: 0 23px 0 26px; text-align: center; }
.status { display: flex; align-items: center; gap: 9px; margin-right: 21px; }
.clock { font-size: 15px; text-align: right; }
</style>
